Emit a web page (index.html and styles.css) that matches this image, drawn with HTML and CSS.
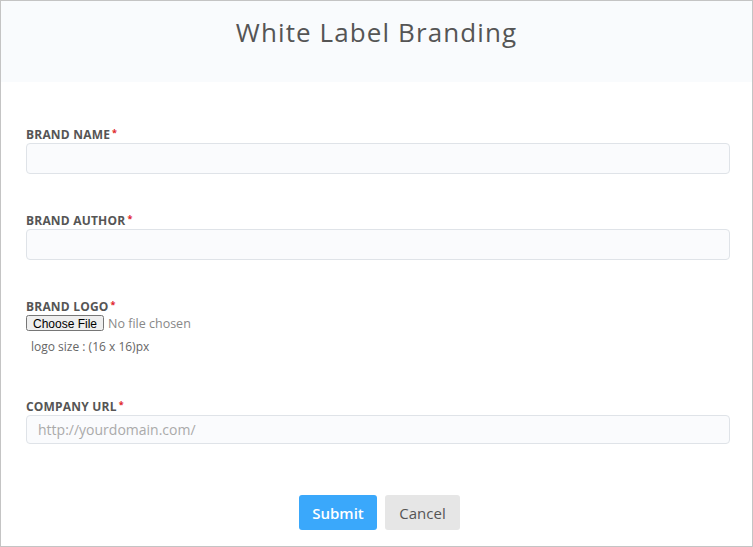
FILE: index.html
```html
<!DOCTYPE html>
<html lang="en">
<head>
    <meta charset="UTF-8">
    <meta name="viewport" content="width=device-width, initial-scale=1.0">
    <title>White Label Branding</title>
    <link rel="stylesheet" href="styles.css">
</head>
<body>
<div class="panel">
    <div class="panel-head">
        <h1>White Label Branding</h1>
    </div>
    <form class="brand-form" onsubmit="return false;">
        <div class="field">
            <label for="brandName">BRAND NAME<span class="req">*</span></label>
            <input type="text" id="brandName" class="text-input">
        </div>
        <div class="field">
            <label for="brandAuthor">BRAND AUTHOR<span class="req">*</span></label>
            <input type="text" id="brandAuthor" class="text-input">
        </div>
        <div class="field field-logo">
            <label for="brandLogo">BRAND LOGO<span class="req">*</span></label>
            <input type="file" id="brandLogo" class="file-input">
            <div class="hint">logo size : (16 x 16)px</div>
        </div>
        <div class="field">
            <label for="companyUrl">COMPANY URL<span class="req">*</span></label>
            <input type="text" id="companyUrl" class="text-input url-input" placeholder="http://yourdomain.com/">
        </div>
        <div class="actions">
            <button type="submit" class="btn btn-submit">Submit</button>
            <button type="button" class="btn btn-cancel">Cancel</button>
        </div>
    </form>
</div>
</body>
</html>
```

FILE: styles.css
```css
body{
    margin: 0;
    font-family: "Open Sans", "Liberation Sans", sans-serif;
    color: #555;
}
.panel{
    width: 753px;
    height: 547px;
    box-sizing: border-box;
    border: 1px solid #c4c4c4;
    background: #fff;
}
.panel-head{
    height: 81px;
    background: #f9fbfd;
    text-align: center;
}
.panel-head h1{
    margin: 0;
    padding-top: 14px;
    font-size: 26px;
    font-weight: 400;
    line-height: 34px;
    letter-spacing: 1.1px;
    color: #555;
}
.brand-form{
    padding: 45px 22px 0 25px;
}
.field{
    margin-bottom: 39px;
}
.field label{
    display: block;
    height: 15px;
    font-size: 12px;
    font-weight: 700;
    line-height: 15px;
    letter-spacing: 0.2px;
    color: #555;
    margin-bottom: 1px;
}
.req{
    color: #e0252b;
    font-size: 9px;
    line-height: 0;
    vertical-align: 3px;
    margin-left: 2px;
}
.text-input{
    display: block;
    width: 100%;
    box-sizing: border-box;
    height: 31px;
    border: 1px solid #dfe3e8;
    border-radius: 4px;
    background: #fafbfd;
    padding: 0 11px;
    font-family: inherit;
    font-size: 14px;
    color: #555;
}
.url-input{
    height: 29px;
}
.text-input::placeholder{
    color: #aaa;
}
.field-logo{
    margin-bottom: 44px;
}
.field-logo label{
    margin-bottom: 1px;
}
.file-input{
    display: block;
    height: 16px;
    font-family: inherit;
    font-size: 12.5px;
    line-height: 16px;
    color: #888;
}
.file-input::file-selector-button{
    height: 16px;
    padding: 0 5px;
    font-family: "Liberation Sans", Arial, sans-serif;
    font-size: 12px;
    color: #000;
    margin-right: 4px;
}
.hint{
    margin-top: 8px;
    padding-left: 5px;
    font-size: 12px;
    line-height: 16px;
    color: #666;
}
.actions{
    display: flex;
    justify-content: center;
    gap: 8px;
    margin-top: 51px;
    margin-left: 3px;
}
.btn{
    height: 35px;
    border: 0;
    border-radius: 3px;
    padding: 0 12px;
    font-family: inherit;
    font-size: 15px;
}
.btn-submit{
    width: 78px;
    background: #3aa8fb;
    color: #fff;
    font-weight: 600;
}
.btn-cancel{
    width: 75px;
    background: #e6e6e6;
    color: #555;
}
```
